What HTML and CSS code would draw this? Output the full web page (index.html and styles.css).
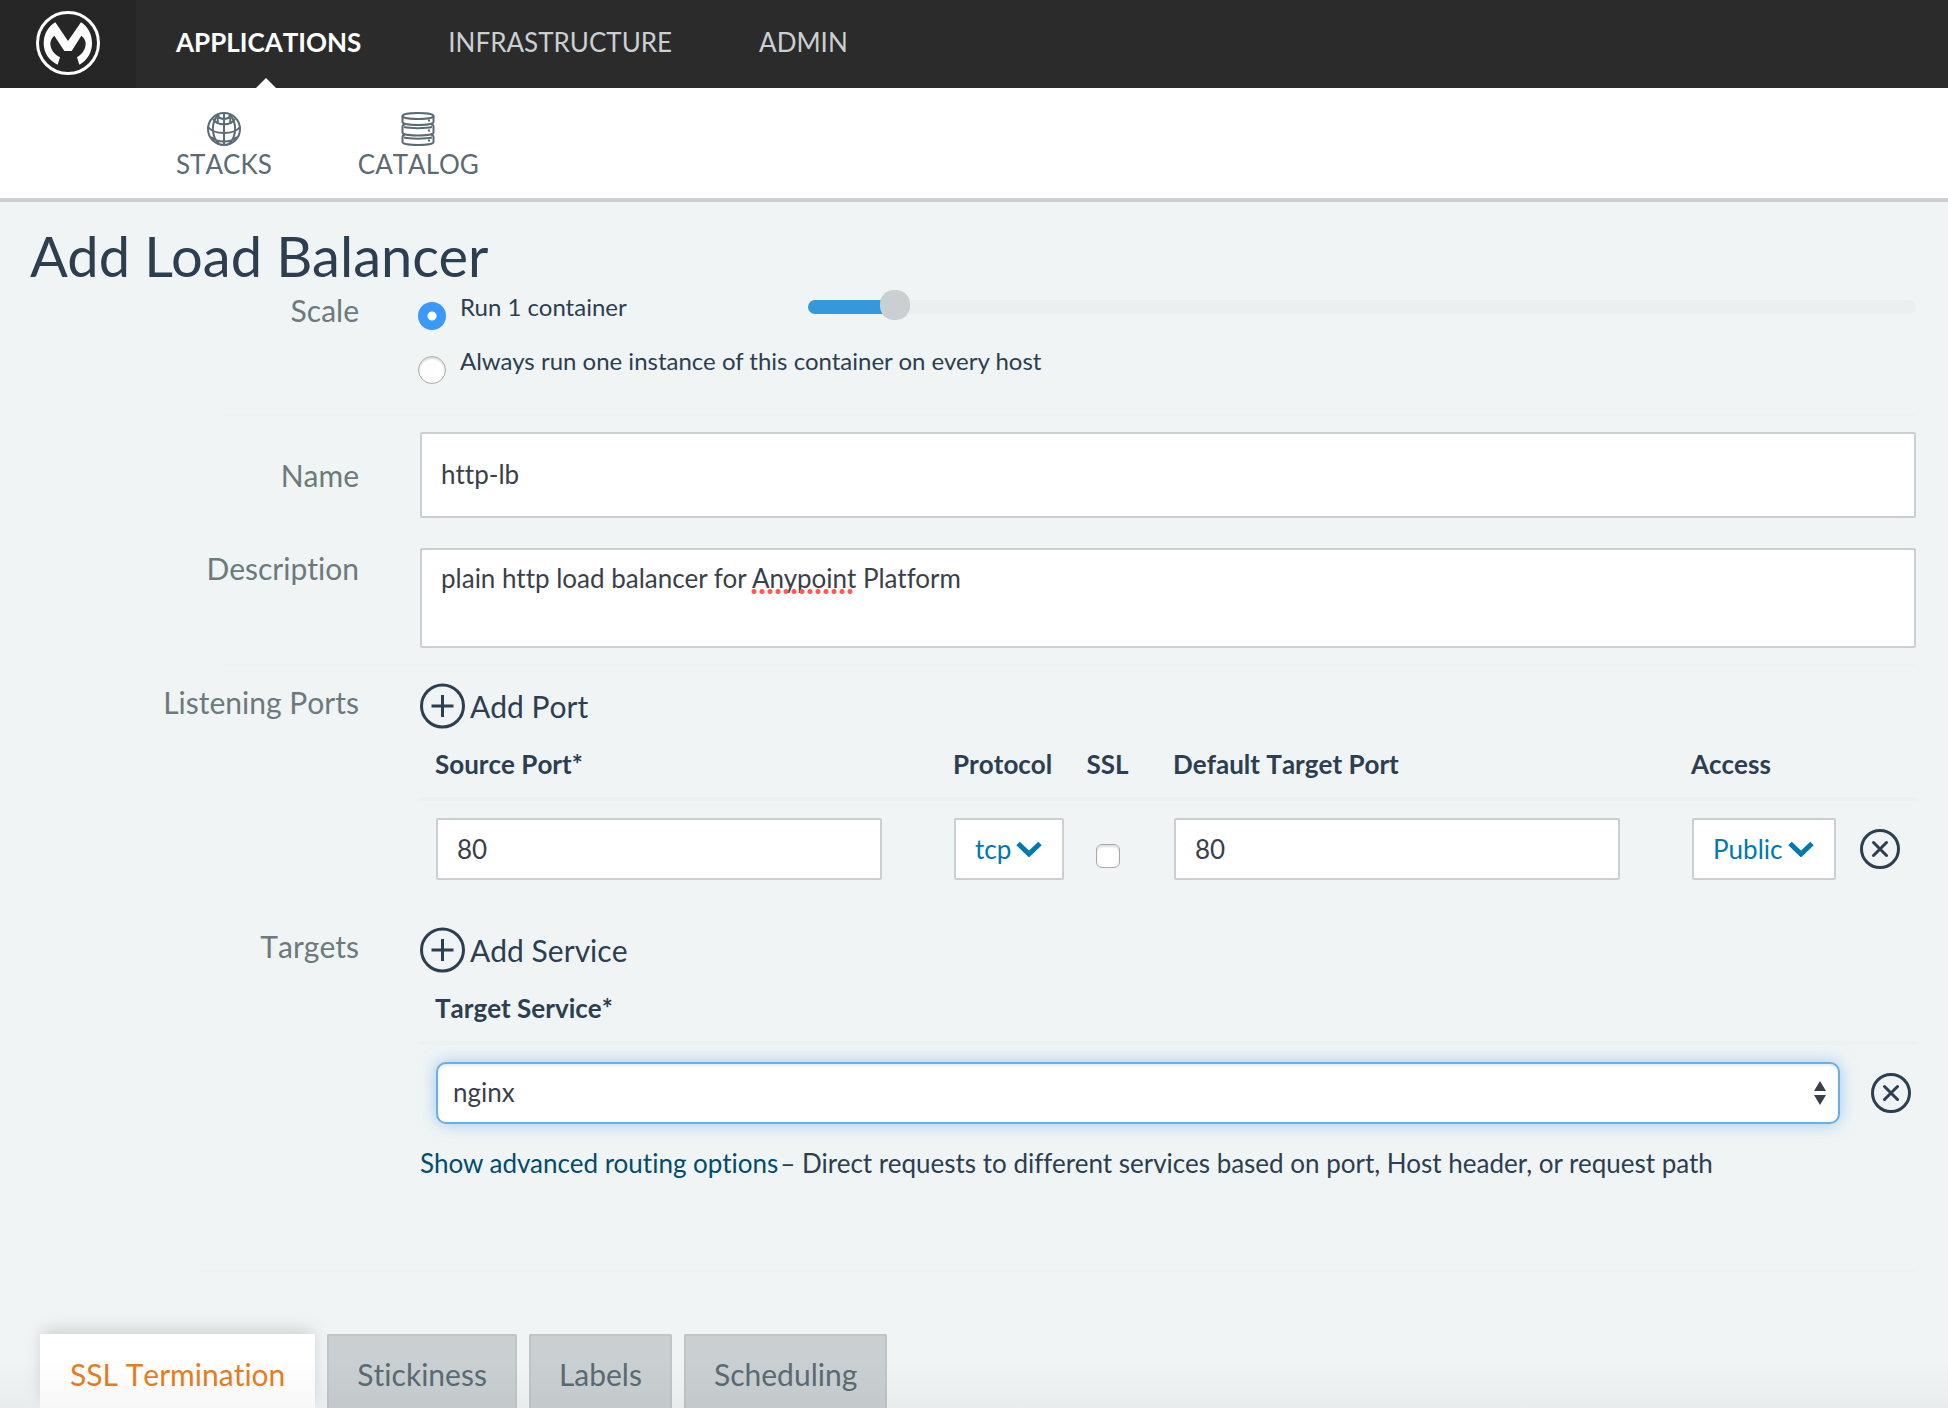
FILE: index.html
```html
<!DOCTYPE html>
<html lang="en">
<head>
<meta charset="utf-8">
<title>Add Load Balancer</title>
<link rel="stylesheet" href="styles.css">
</head>
<body>
<svg class="sprite" aria-hidden="true">
  <symbol id="icon-plus" viewBox="0 0 46 46">
    <circle cx="22.500" cy="23" r="21"/><path d="M11.500 23h22M22.500 12v22"/>
  </symbol>
  <symbol id="icon-remove" viewBox="0 0 40 40">
    <circle cx="20" cy="20" r="18.500"/><path d="M13.500 13.500l13 13M26.500 13.500l-13 13"/>
  </symbol>
  <symbol id="icon-chevron" viewBox="0 0 26 16">
    <path d="M2 2.500l11 10.500 11-10.500"/>
  </symbol>
</svg>

<header class="topbar">
  <a class="brand" href="#" aria-label="Home">
    <svg class="brand-logo" viewBox="108 33 192 192" aria-hidden="true">
      <circle cx="204" cy="129" r="91.500" fill="none" stroke="#fff" stroke-width="9"/>
      <path fill="#fff" d="M166 67 L204 123 L243 67 C264 80 276 103 276 130 C276 159 261 182 238 194 L231 172 C247 162 257 148 257 130 C257 121 251 112 244 107 L215 153 H193 L163 107 C157 112 151 121 151 130 C151 148 162 163 180 172 L173 194 C148 183 131 159 131 130 C131 103 144 80 166 67 Z"/>
    </svg>
  </a>
  <nav class="mainnav" aria-label="Main">
    <a class="mainnav-link is-active" href="#">APPLICATIONS</a>
    <a class="mainnav-link" href="#">INFRASTRUCTURE</a>
    <a class="mainnav-link" href="#">ADMIN</a>
  </nav>
</header>

<nav class="subnav" aria-label="Applications">
  <a class="subnav-link" href="#">
    <svg class="subnav-icon" viewBox="0 0 34 34" aria-hidden="true">
      <circle cx="17" cy="17" r="16"/>
      <path d="M17 2v31M11 3C4 11 4 24 12 32M23 3c7 8 7 21-1 29M1 15c6 8 26 8 32 0M4 25c6 6 20 6 26 0"/>
      <path d="M6 7c4 7 18 7 22 0M12 3c-2 3-1 8-1 8M22 3c2 3 1 8 1 8M10 4c4 4 10 4 14 0"/>
    </svg>
    STACKS
  </a>
  <a class="subnav-link" href="#">
    <svg class="subnav-icon" viewBox="0 0 34 34" aria-hidden="true">
      <path d="M1.500 4c0-4 31-4 31 0s-31 4-31 0z"/>
      <path d="M1.500 4v6c0 4 31 4 31 0V4M4 12.500c-2 0-2.500 1-2.500 2v6c0 4 31 4 31 0v-6c0-1-.5-2-2.500-2M4 23c-2 0-2.500 1-2.500 2v5c0 4 31 4 31 0v-5c0-1-.5-2-2.500-2"/>
      <path d="M3 15c6 1.500 22 1.500 28 0M3 25.500c6 1.500 22 1.500 28 0"/>
      <path d="M27 8.500h2M27 18.500h2M27 28.500h2"/>
    </svg>
    CATALOG
  </a>
</nav>

<main class="page">
  <h1 class="page-title">Add Load Balancer</h1>
  <form>
    <div class="row" role="group" aria-labelledby="scale-label">
      <span class="row-label" id="scale-label">Scale</span>
      <div class="scale">
        <label class="option"><input class="radio" type="radio" name="scale" checked>Run 1 container</label>
        <input class="slider" type="range" min="0" max="15" value="1" aria-label="Number of containers">
        <label class="option option-wide"><input class="radio" type="radio" name="scale">Always run one instance of this container on every host</label>
      </div>
    </div>
    <hr class="divider">

    <div class="row row-name">
      <label class="row-label" for="name">Name</label>
      <input class="field field-tall" id="name" type="text" value="http-lb">
    </div>
    <div class="row">
      <label class="row-label" for="description">Description</label>
      <div class="area-wrap">
        <textarea class="field area" id="description" spellcheck="false">plain http load balancer for Anypoint Platform</textarea>
        <span class="misspelt"></span>
      </div>
    </div>
    <hr class="divider">

    <div class="row row-ports" role="group" aria-labelledby="ports-label">
      <span class="row-label" id="ports-label">Listening Ports</span>
      <div>
        <button class="add" type="button"><svg class="add-icon" aria-hidden="true"><use href="#icon-plus"/></svg>Add Port</button>
        <table class="grid">
          <colgroup><col><col class="col-protocol"><col class="col-ssl"><col><col class="col-access"><col class="col-remove"></colgroup>
          <thead>
            <tr><th>Source Port*</th><th>Protocol</th><th class="cell-ssl">SSL</th><th>Default Target Port</th><th>Access</th><td></td></tr>
          </thead>
          <tbody>
            <tr>
              <td class="cell-port"><input class="field" type="text" value="80" aria-label="Source Port"></td>
              <td><div class="picker picker-protocol"><select class="field picker-select" aria-label="Protocol"><option>tcp</option></select><svg class="picker-icon" aria-hidden="true"><use href="#icon-chevron"/></svg></div></td>
              <td class="cell-ssl"><input class="checkbox" type="checkbox" aria-label="SSL"></td>
              <td class="cell-port"><input class="field" type="text" value="80" aria-label="Default Target Port"></td>
              <td><div class="picker picker-access"><select class="field picker-select" aria-label="Access"><option>Public</option></select><svg class="picker-icon" aria-hidden="true"><use href="#icon-chevron"/></svg></div></td>
              <td class="cell-remove"><button class="remove" type="button" aria-label="Remove port"><svg class="remove-icon" aria-hidden="true"><use href="#icon-remove"/></svg></button></td>
            </tr>
          </tbody>
        </table>
      </div>
    </div>

    <div class="row row-targets" role="group" aria-labelledby="targets-label">
      <span class="row-label" id="targets-label">Targets</span>
      <div>
        <button class="add" type="button"><svg class="add-icon" aria-hidden="true"><use href="#icon-plus"/></svg>Add Service</button>
        <table class="grid">
          <colgroup><col><col class="col-remove-narrow"></colgroup>
          <thead><tr><th>Target Service*</th><td></td></tr></thead>
          <tbody>
            <tr>
              <td class="cell-service"><div class="picker"><select class="field service-select" aria-label="Target Service"><option>nginx</option></select><svg class="service-icon" viewBox="0 0 12 24" aria-hidden="true"><path d="M6 0l6 10H0zM6 24l6-10H0z"/></svg></div></td>
              <td class="cell-remove"><button class="remove" type="button" aria-label="Remove service"><svg class="remove-icon" aria-hidden="true"><use href="#icon-remove"/></svg></button></td>
            </tr>
          </tbody>
        </table>
        <p class="hint"><a class="hint-link" href="#">Show advanced routing options</a><span>– Direct requests to different services based on port, Host header, or request path</span></p>
      </div>
    </div>
    <hr class="divider divider-wide">

    <div class="tabs" role="tablist">
      <button class="tab is-selected" type="button" role="tab" aria-selected="true">SSL Termination</button>
      <button class="tab" type="button" role="tab" aria-selected="false">Stickiness</button>
      <button class="tab" type="button" role="tab" aria-selected="false">Labels</button>
      <button class="tab" type="button" role="tab" aria-selected="false">Scheduling</button>
    </div>
  </form>
</main>
</body>
</html>
```
FILE: styles.css
```css
* { box-sizing: border-box; }

body {
  position: relative;
  margin: 0;
  background: #f0f4f5;
  color: #2c3e50;
  font: 26px/32px Lato, sans-serif;
  font-kerning: none;
  font-variant-ligatures: none;
}
body::after {
  content: "";
  position: absolute;
  right: 0;
  bottom: 0;
  left: 0;
  height: 50px;
  background: linear-gradient(rgba(0, 0, 0, 0), rgba(0, 0, 0, 0.03));
  pointer-events: none;
}
a { text-decoration: none; }
button, input, select, textarea {
  margin: 0;
  color: inherit;
  font: inherit;
  font-kerning: none;
  font-variant-ligatures: none;
}
button { padding: 0; border: 0; background: none; cursor: pointer; }
.sprite { display: none; }

.page-title, .option, .area, .hint { font-kerning: normal; }

/* Top bar */
.topbar { display: flex; height: 88px; background: #2b2b2b; }
.brand { width: 136px; padding: 11px 36px; background: #262626; }
.brand-logo { display: block; width: 64px; height: 64px; }
.mainnav { display: flex; gap: 87px; padding-left: 40px; }
.mainnav-link { position: relative; height: 88px; color: #cacfd2; line-height: 84px; }
.mainnav-link.is-active { color: #fff; font-weight: 700; }
.mainnav-link.is-active::after {
  content: "";
  position: absolute;
  bottom: 0;
  left: 80px;
  border: 10px solid transparent;
  border-top: 0;
  border-bottom-color: #fff;
}

/* Section bar */
.subnav {
  display: flex;
  gap: 86px;
  padding: 24px 0 18px 176px;
  border-bottom: 4px solid #cacfd2;
  background: #fff;
}
.subnav-link { display: flex; flex-direction: column; align-items: center; gap: 2px; color: #5b6b73; }
.subnav-icon { width: 34px; height: 34px; fill: none; stroke: #5b6b73; stroke-width: 2; }

/* Form */
.page { padding: 20px 32px 0 30px; }
.page-title { margin: 0; font-size: 56px; font-weight: 400; line-height: 68px; }
.row { display: grid; grid-template-columns: 329px minmax(0, 1fr); column-gap: 61px; }
.row-label { color: #6c7a7d; font-size: 30px; line-height: 40px; text-align: right; }
.row-name { align-items: center; margin-bottom: 30px; }
.divider { height: 2px; margin: 16px 0 16px 195px; border: 0; background: #eef2f7; }
.divider-wide { margin: 91px 0 62px 170px; }

.scale { display: grid; grid-template-columns: 390px 1fr; margin-left: -2px; }
.option { display: flex; gap: 14px; height: 54px; font-size: 24px; line-height: 34px; }
.option-wide { grid-column: 1 / -1; }
.radio {
  flex: none;
  width: 28px;
  height: 28px;
  margin-top: 12px;
  border: 1px solid #a9a9a9;
  border-radius: 50%;
  background: #fff;
  box-shadow: inset 0 2px 2px #ddd;
  appearance: none;
}
.radio:checked {
  border: 0;
  background: radial-gradient(circle, #fff 4px, #3b99fc 5px);
  box-shadow: none;
}
.slider { width: 100%; height: 34px; background: none; appearance: none; }
.slider::-webkit-slider-runnable-track {
  height: 14px;
  border-radius: 7px;
  background: linear-gradient(#3498db, #3498db) 0 0 / 8% 100% no-repeat #ebeff0;
}
.slider::-webkit-slider-thumb {
  width: 30px;
  height: 30px;
  margin-top: -10px;
  border-radius: 14px;
  background: #cacfd2;
  appearance: none;
}

.field {
  display: block;
  width: 100%;
  height: 62px;
  padding: 0 20px 0 19px;
  border: 2px solid #cacfd2;
  border-radius: 2px;
  outline: 0;
  background: #fff;
  color: #3a3f4b;
}
.field-tall { height: 86px; padding-bottom: 2px; }
.area-wrap { position: relative; }
.area { height: 100px; padding: 10px 19px; line-height: 36px; resize: none; }
.misspelt {
  position: absolute;
  top: 41px;
  left: 330px;
  width: 104px;
  height: 5px;
  background: radial-gradient(circle, #ff5a4f 2px, transparent 3px) 0 0 / 8px 5px;
}

.row-targets { margin-top: 30px; }
.add { display: flex; align-items: center; gap: 4px; height: 48px; font-size: 30px; line-height: 48px; }
.add-icon { width: 46px; height: 46px; fill: none; stroke: #2c3e50; stroke-width: 3; }

.grid { width: 100%; border-collapse: separate; border-spacing: 0; table-layout: fixed; }
.grid th { padding: 18px 0 17px 15px; font-weight: 700; text-align: left; white-space: nowrap; }
.grid thead th, .grid thead td { border-bottom: 4px solid #edf1f2; }
.grid tbody td { padding: 17px 0 16px 16px; }
.grid tbody .cell-port { padding-right: 56px; }
.grid tbody .cell-service { padding-right: 26px; }
.grid .cell-ssl { padding-right: 14px; padding-left: 0; text-align: center; }
.grid tbody .cell-remove { padding-left: 0; text-align: center; }
.col-protocol { width: 133px; }
.col-ssl { width: 87px; }
.col-access { width: 168px; }
.col-remove { width: 72px; }
.col-remove-narrow { width: 50px; }

.picker { position: relative; }
.picker-protocol { width: 110px; }
.picker-access { width: 144px; }
.picker-select { color: #0079ae; appearance: none; }
.picker-icon {
  position: absolute;
  top: 23px;
  right: 22px;
  width: 26px;
  height: 16px;
  fill: none;
  stroke: #0079ae;
  stroke-width: 5;
  pointer-events: none;
}
.service-select {
  padding: 0 15px 2px;
  border-color: #66afe9;
  border-radius: 10px;
  box-shadow: inset 0 2px 2px rgba(0, 0, 0, 0.08), 0 0 16px rgba(102, 175, 233, 0.6);
  appearance: none;
}
.service-icon {
  position: absolute;
  top: 19px;
  right: 14px;
  width: 12px;
  height: 24px;
  fill: #3a3f4b;
  pointer-events: none;
}
.checkbox {
  display: block;
  width: 24px;
  height: 24px;
  margin: 14px auto 0;
  border: 1px solid #a9a9a9;
  border-radius: 6px;
  background: #fff;
  box-shadow: inset 0 2px 2px #ddd;
  appearance: none;
}
.remove { display: inline-block; width: 40px; height: 40px; vertical-align: middle; }
.remove-icon { display: block; width: 40px; height: 40px; fill: none; stroke: #2c3e50; stroke-width: 3; stroke-linecap: round; }

.hint { display: flex; gap: 2px; margin: 7px 0 0; }
.hint-link { color: #004d6b; }

/* Tabs */
.tabs { display: flex; gap: 12px; padding-left: 10px; }
.tab {
  padding: 18px 28px 14px;
  border: 2px solid #c0c5c7;
  border-bottom: 0;
  border-radius: 2px 2px 0 0;
  background: #cacfd2;
  color: #5b6b73;
  font-size: 30px;
  line-height: 40px;
}
.tab.is-selected {
  border-color: #fff;
  background: #fff;
  box-shadow: 0 -6px 16px -2px rgba(0, 0, 0, 0.15);
  color: #e67e22;
}
```
